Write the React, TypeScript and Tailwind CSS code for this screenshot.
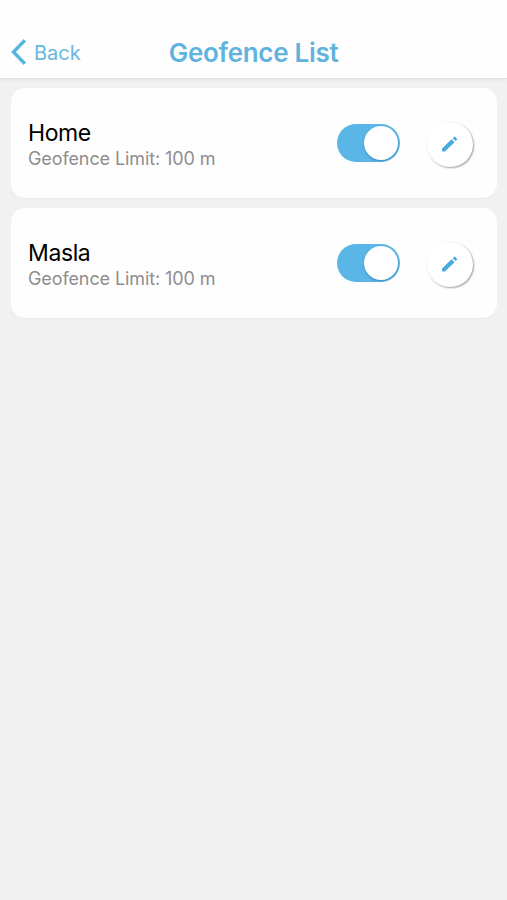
import { useState } from "react";
import { clsx } from "clsx";

type Geofence = {
  id: number;
  name: string;
  limit: number;
  enabled: boolean;
};

function BackIcon() {
  return (
    <svg width="16" height="26" viewBox="0 0 16 26" fill="none">
      <path d="M13.9 1.3L2.5 13L13.9 24.7" stroke="#5ab4e0" strokeWidth="3.4" />
    </svg>
  );
}

function PencilIcon() {
  return (
    <svg
      width="18"
      height="18"
      viewBox="0 0 18 18"
      fill="#4ba9dc"
      stroke="#4ba9dc"
      strokeWidth="0.9"
      strokeLinejoin="round"
    >
      <path d="M1.5 13.6L10.5 4.8L13.1 7.3L4 16.1H1.5Z" />
      <path d="M12.1 3.3L13.2 2.3Q13.7 1.9 14.2 2.3L15.6 3.7Q16 4.2 15.6 4.7L14.6 5.8Z" />
    </svg>
  );
}

function Toggle({ on, onClick }: { on: boolean; onClick: () => void }) {
  return (
    <button
      type="button"
      role="switch"
      aria-checked={on}
      onClick={onClick}
      className={clsx(
        "flex h-[38px] w-[63px] items-center rounded-full p-0.5",
        on ? "justify-end bg-[#59b6e7]" : "justify-start bg-gray-300"
      )}
    >
      <span className="h-[34px] w-[34px] rounded-full bg-white shadow-[0_1px_2px_rgba(0,60,100,0.35)]" />
    </button>
  );
}

export default function App() {
  const [fences, setFences] = useState<Geofence[]>([
    { id: 1, name: "Home", limit: 100, enabled: true },
    { id: 2, name: "Masla", limit: 100, enabled: true },
  ]);

  const handleToggle = (id: number) => {
    setFences(
      fences.map((f) => (f.id === id ? { ...f, enabled: !f.enabled } : f))
    );
  };

  return (
    <div className="min-h-screen bg-[#f1f1f1] font-[Inter,sans-serif]">
      <header className="grid h-[79px] grid-cols-[1fr_auto_1fr] items-end border-b border-[#e2e2e2] bg-[#fefefe] pb-[11px] shadow-[0_1px_4px_rgba(0,0,0,0.06)]">
        <button
          type="button"
          className="flex h-7 items-center gap-[7px] pb-0.5 pl-[11px] text-[20px] text-[#68b7df]"
        >
          <BackIcon />
          <span className="pt-px">Back</span>
        </button>
        <h1 className="text-[26px] leading-7 font-semibold tracking-[-0.3px] text-[#5fb3de]">
          Geofence List
        </h1>
      </header>

      <main className="flex flex-col gap-2.5 pt-[9px] pr-2.5 pl-[11px]">
        {fences.map((f) => (
          <div
            key={f.id}
            className="flex h-[110px] items-center rounded-[14px] bg-[#fefefe] pr-6 pl-[17px] shadow-[0_1px_1px_rgba(0,0,0,0.03)]"
          >
            <div className="flex-1 pt-[5px]">
              <p className="text-[23px] leading-[26px] tracking-[-0.4px] text-black">
                {f.name}
              </p>
              <p className="text-[18px] leading-[25px] tracking-[-0.1px] text-[#8e8e8e]">
                Geofence Limit: {f.limit} m
              </p>
            </div>
            <Toggle on={f.enabled} onClick={() => handleToggle(f.id)} />
            <button
              type="button"
              aria-label={"Edit " + f.name}
              className="mt-[3px] ml-[27px] flex h-[45px] w-[46px] items-center justify-center rounded-full bg-white pr-px pb-px shadow-[1px_1px_2px_rgba(0,0,0,0.38)]"
            >
              <PencilIcon />
            </button>
          </div>
        ))}
      </main>
    </div>
  );
}
